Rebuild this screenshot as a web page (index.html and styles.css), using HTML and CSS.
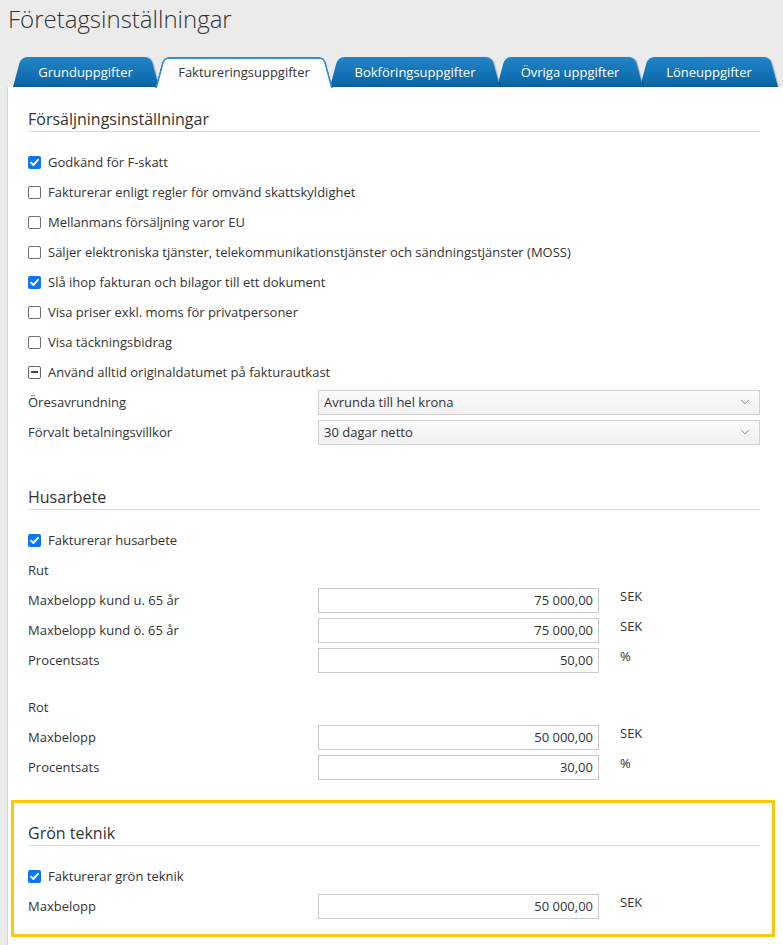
FILE: index.html
```html
<!DOCTYPE html>
<html lang="sv">
<head>
<meta charset="utf-8">
<title>Företagsinställningar</title>
<link rel="stylesheet" href="styles.css">
</head>
<body>
<h1 class="page-title">Företagsinställningar</h1>
<nav class="tabs">
  <div class="tab tab-grund">Grunduppgifter</div>
  <div class="tab tab-fakt active">Faktureringsuppgifter</div>
  <div class="tab tab-bok">Bokföringsuppgifter</div>
  <div class="tab tab-ovr">Övriga uppgifter</div>
  <div class="tab tab-lon">Löneuppgifter</div>
</nav>
<main class="panel">
  <section class="section">
    <h2 class="section-title">Försäljningsinställningar</h2>
    <div class="check-row"><span class="cb checked"><svg viewBox="0 0 13 13" width="13" height="13"><path d="M3 6.6 L5.4 9 L10 3.8" fill="none" stroke="#fff" stroke-width="1.9" stroke-linecap="round" stroke-linejoin="round"/></svg></span>Godkänd för F-skatt</div>
    <div class="check-row"><span class="cb"></span>Fakturerar enligt regler för omvänd skattskyldighet</div>
    <div class="check-row"><span class="cb"></span>Mellanmans försäljning varor EU</div>
    <div class="check-row"><span class="cb"></span>Säljer elektroniska tjänster, telekommunikationstjänster och sändningstjänster (MOSS)</div>
    <div class="check-row"><span class="cb checked"><svg viewBox="0 0 13 13" width="13" height="13"><path d="M3 6.6 L5.4 9 L10 3.8" fill="none" stroke="#fff" stroke-width="1.9" stroke-linecap="round" stroke-linejoin="round"/></svg></span>Slå ihop fakturan och bilagor till ett dokument</div>
    <div class="check-row"><span class="cb"></span>Visa priser exkl. moms för privatpersoner</div>
    <div class="check-row"><span class="cb"></span>Visa täckningsbidrag</div>
    <div class="check-row"><span class="cb mixed"><span class="dash"></span></span>Använd alltid originaldatumet på fakturautkast</div>
    <div class="field-row">
      <span class="label">Öresavrundning</span>
      <div class="select"><span>Avrunda till hel krona</span><svg width="10" height="6" viewBox="0 0 10 6"><path d="M1 0.8 L5 4.8 L9 0.8" fill="none" stroke="#8a8a8a" stroke-width="1"/></svg></div>
    </div>
    <div class="field-row">
      <span class="label">Förvalt betalningsvillkor</span>
      <div class="select"><span>30 dagar netto</span><svg width="10" height="6" viewBox="0 0 10 6"><path d="M1 0.8 L5 4.8 L9 0.8" fill="none" stroke="#8a8a8a" stroke-width="1"/></svg></div>
    </div>
  </section>

  <section class="section section-hus">
    <h2 class="section-title">Husarbete</h2>
    <div class="check-row"><span class="cb checked"><svg viewBox="0 0 13 13" width="13" height="13"><path d="M3 6.6 L5.4 9 L10 3.8" fill="none" stroke="#fff" stroke-width="1.9" stroke-linecap="round" stroke-linejoin="round"/></svg></span>Fakturerar husarbete</div>
    <div class="text-row">Rut</div>
    <div class="field-row">
      <span class="label">Maxbelopp kund u. 65 år</span>
      <div class="input">75 000,00</div><span class="unit">SEK</span>
    </div>
    <div class="field-row">
      <span class="label">Maxbelopp kund ö. 65 år</span>
      <div class="input">75 000,00</div><span class="unit">SEK</span>
    </div>
    <div class="field-row">
      <span class="label">Procentsats</span>
      <div class="input">50,00</div><span class="unit">%</span>
    </div>
    <div class="text-row text-row-gap">Rot</div>
    <div class="field-row">
      <span class="label">Maxbelopp</span>
      <div class="input">50 000,00</div><span class="unit">SEK</span>
    </div>
    <div class="field-row">
      <span class="label">Procentsats</span>
      <div class="input">30,00</div><span class="unit">%</span>
    </div>
  </section>

  <section class="section highlight">
    <h2 class="section-title">Grön teknik</h2>
    <div class="check-row"><span class="cb checked"><svg viewBox="0 0 13 13" width="13" height="13"><path d="M3 6.6 L5.4 9 L10 3.8" fill="none" stroke="#fff" stroke-width="1.9" stroke-linecap="round" stroke-linejoin="round"/></svg></span>Fakturerar grön teknik</div>
    <div class="field-row">
      <span class="label">Maxbelopp</span>
      <div class="input">50 000,00</div><span class="unit">SEK</span>
    </div>
  </section>
</main>
</body>
</html>
```

FILE: styles.css
```css
* { box-sizing: border-box; }

html, body {
  margin: 0;
  padding: 0;
}

body {
  background: #ebebeb;
  font-family: "Open Sans", "Liberation Sans", sans-serif;
  font-size: 13px;
  color: #333;
  overflow: hidden;
}

.page-title {
  margin: 0;
  padding: 4px 0 0 8px;
  font-size: 24px;
  line-height: 30px;
  font-weight: 300;
  color: #333;
}

.tabs {
  display: flex;
  margin-top: 23px;
  padding-left: 16px;
  height: 30px;
}

.tab {
  position: relative;
  height: 30px;
  display: flex;
  align-items: center;
  justify-content: center;
  color: #fff;
  font-weight: 500;
  font-size: 13px;
  margin-left: -3px;
}

.tab::before,
.tab::after {
  content: "";
  position: absolute;
  top: 0;
  bottom: 0;
  z-index: -1;
  background: linear-gradient(#2185c9, #0c69aa 85%, #095d98);
}

.tab::before {
  left: 0;
  width: calc(50% + 1px);
  transform: skewX(-15deg);
  transform-origin: bottom left;
  border-radius: 6px 0 0 0;
}

.tab::after {
  right: 0;
  width: calc(50% + 1px);
  transform: skewX(15deg);
  transform-origin: bottom right;
  border-radius: 0 6px 0 0;
  box-shadow: 1px 0 1px rgba(0, 0, 0, 0.25);
}

.tab-grund { width: 145px; z-index: 5; }
.tab-fakt  { width: 178px; z-index: 10; }
.tab-bok   { width: 170px; z-index: 4; }
.tab-ovr   { width: 146px; z-index: 3; }
.tab-lon   { width: 138px; z-index: 2; }

.tab.active {
  color: #333;
  font-weight: 400;
}

.tab.active::before,
.tab.active::after {
  background: #fff;
  border-top: 2px solid #2a90dc;
  bottom: -1px;
  box-shadow: none;
}

.tab.active::before {
  border-left: 2px solid #2a90dc;
}

.tab.active::after {
  border-right: 2px solid #2a90dc;
}

.panel {
  margin-left: 7px;
  border-left: 1px solid #d6d6d6;
  background: #fff;
  padding: 20px 23px 0 20px;
  min-height: calc(100vh - 87px);
}

.section-title {
  margin: 0 0 15px;
  font-size: 16px;
  line-height: 24px;
  font-weight: 400;
  color: #333;
  border-bottom: 1px solid #dcdcdc;
}

.check-row,
.text-row,
.field-row {
  height: 30px;
  display: flex;
  align-items: center;
}

.text-row-gap { margin-top: 17px; }

.cb {
  width: 13px;
  height: 13px;
  border: 1px solid #6f6f6f;
  border-radius: 2px;
  background: #fff;
  margin-right: 7px;
  flex: none;
  display: flex;
  align-items: center;
  justify-content: center;
}

.cb.checked {
  background: #0a75f5;
  border: none;
}

.cb.mixed {
  border-color: #666;
}

.cb .dash {
  width: 7px;
  height: 1.5px;
  background: #444;
}

.label {
  width: 290px;
  flex: none;
}

.select {
  flex: 1;
  height: 25px;
  border: 1px solid #d2d2d2;
  background: linear-gradient(#fafafa, #f1f1f1);
  display: flex;
  align-items: center;
  justify-content: space-between;
  padding: 0 9px 0 5px;
  color: #333;
}

.input {
  width: 281px;
  height: 25px;
  border: 1px solid #c8c8c8;
  background: #fff;
  display: flex;
  align-items: center;
  justify-content: flex-end;
  padding-right: 5px;
  flex: none;
}

.unit {
  margin-left: 21px;
  align-self: flex-start;
  margin-top: 2px;
  line-height: 18px;
}

.section-hus { margin-top: 38px; }

.highlight {
  margin: 18px -15px 0 -17px;
  border: 3px solid #f9c80e;
  padding: 18px 13px 13px 14px;
}
```
